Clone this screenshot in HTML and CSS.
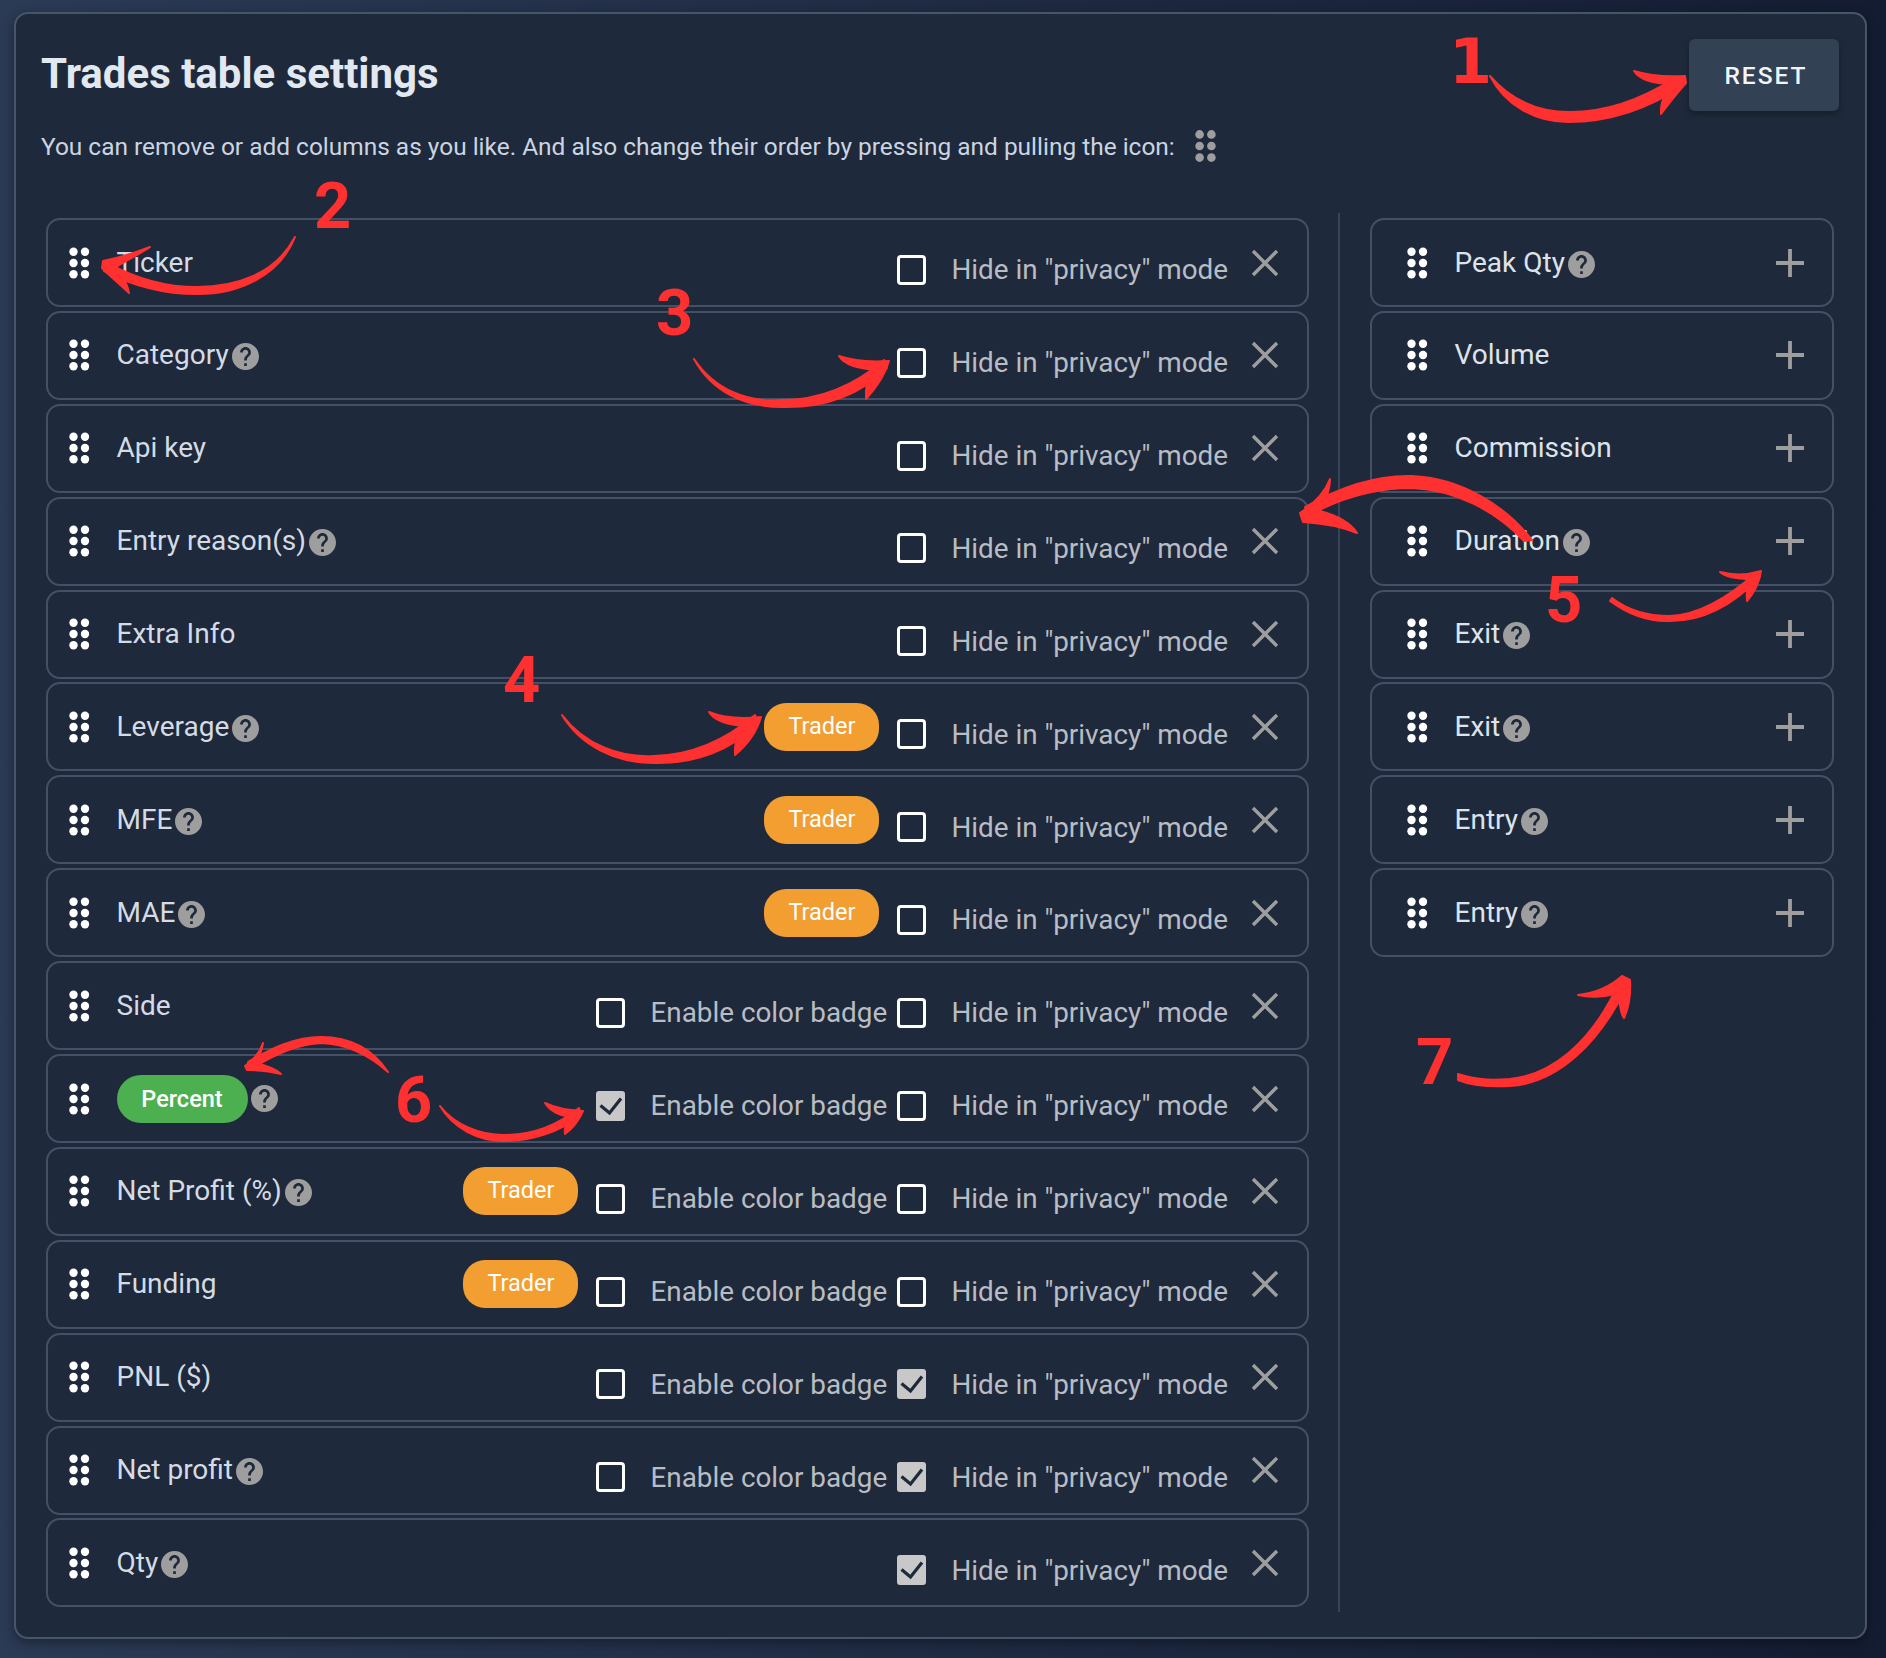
FILE: index.html
```html
<!DOCTYPE html>
<html>
    <head>
        <meta charset="utf-8">
        <title>Trades table settings</title>
        <link rel="stylesheet" href="styles.css">
    </head>
    <body>
       <svg class="defs" width="0" height="0">
           <symbol id="drag" viewBox="0 0 20.5 32">
               <circle cx="4.5" cy="4.7" r="4.2"/><circle cx="16" cy="4.7" r="4.2"/>
               <circle cx="4.5" cy="16" r="4.2"/><circle cx="16" cy="16" r="4.2"/>
               <circle cx="4.5" cy="27.3" r="4.2"/><circle cx="16" cy="27.3" r="4.2"/>
           </symbol>
           <symbol id="help" viewBox="2 2 20 20">
               <path d="M12 2C6.48 2 2 6.48 2 12s4.48 10 10 10 10-4.48 10-10S17.52 2 12 2zm1 17h-2v-2h2v2zm2.07-7.75l-.9.92C13.45 12.9 13 13.5 13 15h-2v-.5c0-1.1.45-2.1 1.17-2.83l1.24-1.26c.37-.36.59-.86.59-1.41 0-1.1-.9-2-2-2s-2 .9-2 2H8c0-2.21 1.79-4 4-4s4 1.79 4 4c0 .88-.36 1.68-.93 2.25z"/>
           </symbol>
           <symbol id="close" viewBox="0 0 28 28">
               <path d="M2 2L26 26M26 2L2 26" fill="none" stroke="currentColor" stroke-width="3.4"/>
           </symbol>
           <symbol id="plus" viewBox="0 0 28 28">
               <path d="M14 0V28M0 14H28" fill="none" stroke="currentColor" stroke-width="3.8"/>
           </symbol>
           <symbol id="check" viewBox="0 0 29 30">
               <rect width="29" height="30" rx="3" fill="#c8c8c8"/>
               <path d="M4.5 14.5L13.5 22L25 7.5" fill="none" stroke="#1e293b" stroke-width="3.2"/>
           </symbol>
       </svg>

       <div class="panel">
           <div class="head">
               <h1>Trades table settings</h1>
               <button class="reset">RESET</button>
           </div>
           <div class="intro">
               <span>You can remove or add columns as you like. And also change their order by pressing and pulling the icon:</span>
               <svg class="intro-drag"><use href="#drag"/></svg>
           </div>

           <div class="columns">
               <div class="list list-left">
                   <div class="row">
                       <svg class="drag"><use href="#drag"/></svg><span class="name">Ticker</span>
                       <div class="opts">
                           <span class="box"></span><span class="opt-text">Hide in "privacy" mode</span>
                       </div>
                       <svg class="close"><use href="#close"/></svg>
                   </div>
                   <div class="row">
                       <svg class="drag"><use href="#drag"/></svg><span class="name">Category</span><svg class="help"><use href="#help"/></svg>
                       <div class="opts">
                           <span class="box"></span><span class="opt-text">Hide in "privacy" mode</span>
                       </div>
                       <svg class="close"><use href="#close"/></svg>
                   </div>
                   <div class="row">
                       <svg class="drag"><use href="#drag"/></svg><span class="name">Api key</span>
                       <div class="opts">
                           <span class="box"></span><span class="opt-text">Hide in "privacy" mode</span>
                       </div>
                       <svg class="close"><use href="#close"/></svg>
                   </div>
                   <div class="row">
                       <svg class="drag"><use href="#drag"/></svg><span class="name">Entry reason(s)</span><svg class="help"><use href="#help"/></svg>
                       <div class="opts">
                           <span class="box"></span><span class="opt-text">Hide in "privacy" mode</span>
                       </div>
                       <svg class="close"><use href="#close"/></svg>
                   </div>
                   <div class="row">
                       <svg class="drag"><use href="#drag"/></svg><span class="name">Extra Info</span>
                       <div class="opts">
                           <span class="box"></span><span class="opt-text">Hide in "privacy" mode</span>
                       </div>
                       <svg class="close"><use href="#close"/></svg>
                   </div>
                   <div class="row">
                       <svg class="drag"><use href="#drag"/></svg><span class="name">Leverage</span><svg class="help"><use href="#help"/></svg>
                       <span class="trader">Trader</span>
                       <div class="opts opts-trader">
                           <span class="box"></span><span class="opt-text">Hide in "privacy" mode</span>
                       </div>
                       <svg class="close"><use href="#close"/></svg>
                   </div>
                   <div class="row">
                       <svg class="drag"><use href="#drag"/></svg><span class="name">MFE</span><svg class="help"><use href="#help"/></svg>
                       <span class="trader">Trader</span>
                       <div class="opts opts-trader">
                           <span class="box"></span><span class="opt-text">Hide in "privacy" mode</span>
                       </div>
                       <svg class="close"><use href="#close"/></svg>
                   </div>
                   <div class="row">
                       <svg class="drag"><use href="#drag"/></svg><span class="name">MAE</span><svg class="help"><use href="#help"/></svg>
                       <span class="trader">Trader</span>
                       <div class="opts opts-trader">
                           <span class="box"></span><span class="opt-text">Hide in "privacy" mode</span>
                       </div>
                       <svg class="close"><use href="#close"/></svg>
                   </div>
                   <div class="row">
                       <svg class="drag"><use href="#drag"/></svg><span class="name">Side</span>
                       <div class="opts">
                           <span class="box"></span><span class="opt-text opt-color">Enable color badge</span>
                           <span class="box"></span><span class="opt-text">Hide in "privacy" mode</span>
                       </div>
                       <svg class="close"><use href="#close"/></svg>
                   </div>
                   <div class="row">
                       <svg class="drag"><use href="#drag"/></svg><span class="percent">Percent</span><svg class="help help-percent"><use href="#help"/></svg>
                       <div class="opts">
                           <svg class="box-on"><use href="#check"/></svg><span class="opt-text opt-color">Enable color badge</span>
                           <span class="box"></span><span class="opt-text">Hide in "privacy" mode</span>
                       </div>
                       <svg class="close"><use href="#close"/></svg>
                   </div>
                   <div class="row">
                       <svg class="drag"><use href="#drag"/></svg><span class="name">Net Profit (%)</span><svg class="help"><use href="#help"/></svg>
                       <span class="trader">Trader</span>
                       <div class="opts opts-trader">
                           <span class="box"></span><span class="opt-text opt-color">Enable color badge</span>
                           <span class="box"></span><span class="opt-text">Hide in "privacy" mode</span>
                       </div>
                       <svg class="close"><use href="#close"/></svg>
                   </div>
                   <div class="row">
                       <svg class="drag"><use href="#drag"/></svg><span class="name">Funding</span>
                       <span class="trader">Trader</span>
                       <div class="opts opts-trader">
                           <span class="box"></span><span class="opt-text opt-color">Enable color badge</span>
                           <span class="box"></span><span class="opt-text">Hide in "privacy" mode</span>
                       </div>
                       <svg class="close"><use href="#close"/></svg>
                   </div>
                   <div class="row">
                       <svg class="drag"><use href="#drag"/></svg><span class="name">PNL ($)</span>
                       <div class="opts">
                           <span class="box"></span><span class="opt-text opt-color">Enable color badge</span>
                           <svg class="box-on"><use href="#check"/></svg><span class="opt-text">Hide in "privacy" mode</span>
                       </div>
                       <svg class="close"><use href="#close"/></svg>
                   </div>
                   <div class="row">
                       <svg class="drag"><use href="#drag"/></svg><span class="name">Net profit</span><svg class="help"><use href="#help"/></svg>
                       <div class="opts">
                           <span class="box"></span><span class="opt-text opt-color">Enable color badge</span>
                           <svg class="box-on"><use href="#check"/></svg><span class="opt-text">Hide in "privacy" mode</span>
                       </div>
                       <svg class="close"><use href="#close"/></svg>
                   </div>
                   <div class="row">
                       <svg class="drag"><use href="#drag"/></svg><span class="name">Qty</span><svg class="help"><use href="#help"/></svg>
                       <div class="opts">
                           <svg class="box-on"><use href="#check"/></svg><span class="opt-text">Hide in "privacy" mode</span>
                       </div>
                       <svg class="close"><use href="#close"/></svg>
                   </div>
               </div>

               <div class="divider"></div>

               <div class="list list-right">
                   <div class="row row-add"><svg class="drag"><use href="#drag"/></svg><span class="name">Peak Qty</span><svg class="help"><use href="#help"/></svg><svg class="plus"><use href="#plus"/></svg></div>
                   <div class="row row-add"><svg class="drag"><use href="#drag"/></svg><span class="name">Volume</span><svg class="plus"><use href="#plus"/></svg></div>
                   <div class="row row-add"><svg class="drag"><use href="#drag"/></svg><span class="name">Commission</span><svg class="plus"><use href="#plus"/></svg></div>
                   <div class="row row-add"><svg class="drag"><use href="#drag"/></svg><span class="name">Duration</span><svg class="help"><use href="#help"/></svg><svg class="plus"><use href="#plus"/></svg></div>
                   <div class="row row-add"><svg class="drag"><use href="#drag"/></svg><span class="name">Exit</span><svg class="help"><use href="#help"/></svg><svg class="plus"><use href="#plus"/></svg></div>
                   <div class="row row-add"><svg class="drag"><use href="#drag"/></svg><span class="name">Exit</span><svg class="help"><use href="#help"/></svg><svg class="plus"><use href="#plus"/></svg></div>
                   <div class="row row-add"><svg class="drag"><use href="#drag"/></svg><span class="name">Entry</span><svg class="help"><use href="#help"/></svg><svg class="plus"><use href="#plus"/></svg></div>
                   <div class="row row-add"><svg class="drag"><use href="#drag"/></svg><span class="name">Entry</span><svg class="help"><use href="#help"/></svg><svg class="plus"><use href="#plus"/></svg></div>
               </div>
           </div>
       </div>

       <!-- red hand drawn notes on top of the page -->
       <svg class="notes" viewBox="0 0 1886 1658">
           <text class="note-one" x="1449" y="83">1</text>
           <path d="M1490 76C1515 105 1545 112 1570 112C1610 112 1645 97 1675 78L1682 86C1650 108 1610 122 1568 122C1535 122 1505 105 1490 76Z"/>
           <path d="M1634 71C1650 76 1668 77 1685 76L1686 83C1675 95 1668 105 1661 114C1660 105 1664 96 1668 90L1672 84C1655 84 1640 80 1634 71Z"/>

           <text x="314" y="228">2</text>
           <path d="M295 237C275 275 235 287 197 287C165 287 135 278 108 263L104 271C135 287 165 294 197 294C240 294 280 275 295 237Z"/>
           <path d="M150 247C135 253 118 258 103 261L102 268C112 278 122 286 129 293C128 284 122 275 116 267C127 260 140 254 150 247Z"/>

           <text x="656" y="335">3</text>
           <path d="M694 359C715 390 748 403 782 400C820 400 855 385 884 360L887 368C860 395 825 408 782 407C745 407 712 392 694 359Z"/>
           <path d="M839 356C856 362 872 362 889 361C885 375 876 388 866 399C865 388 868 378 873 370C860 368 845 366 839 356Z"/>

           <text x="503" y="702">4</text>
           <path d="M562 715C585 745 620 758 654 756C695 755 728 738 755 715L758 723C732 750 695 764 654 763C615 763 580 745 562 715Z"/>
           <path d="M709 712C726 719 743 719 761 717C757 731 747 745 735 755C734 745 737 735 744 726C730 725 715 722 709 712Z"/>

           <text x="1545" y="622">5</text>
           <path d="M1532 540C1505 505 1460 478 1412 476C1375 475 1340 487 1305 507L1308 516C1340 498 1375 488 1412 488C1455 490 1495 510 1524 541Z"/>
           <path d="M1330 479C1325 492 1315 503 1300 513L1303 522C1320 523 1340 526 1357 533C1350 522 1335 515 1320 511C1325 502 1330 490 1330 479Z"/>
           <path d="M1612 598C1630 612 1650 616 1670 616C1700 615 1730 596 1757 572L1760 577C1735 603 1705 621 1670 621C1645 622 1625 612 1610 601Z"/>
           <path d="M1720 572C1735 576 1748 575 1761 571C1759 583 1754 593 1747 601C1746 594 1748 585 1752 579C1740 579 1727 578 1720 572Z"/>

           <text x="395" y="1122">6</text>
           <path d="M388 1072C372 1048 348 1037 321 1037C295 1037 272 1048 248 1062L251 1069C275 1054 298 1044 321 1043C345 1044 368 1054 388 1072Z"/>
           <path d="M263 1043C260 1052 254 1060 245 1066L247 1070C258 1070 270 1071 281 1074C275 1068 264 1065 256 1063C259 1057 262 1050 263 1043Z"/>
           <path d="M440 1106C455 1125 480 1135 504 1135C532 1135 558 1125 579 1108L581 1115C560 1132 532 1141 504 1141C478 1141 453 1128 440 1106Z"/>
           <path d="M545 1103C557 1109 570 1110 583 1111C579 1120 573 1128 565 1134C564 1127 566 1122 570 1117C560 1116 550 1111 545 1103Z"/>

           <text x="1416" y="1084">7</text>
           <path d="M1458 1074C1480 1081 1495 1080 1510 1079C1550 1075 1590 1045 1618 985L1625 990C1600 1040 1560 1083 1510 1086C1490 1087 1470 1085 1458 1080Z"/>
           <path d="M1578 995C1596 993 1612 985 1622 976L1630 980C1631 995 1629 1007 1624 1018C1620 1012 1619 1000 1620 992C1608 997 1590 998 1578 995Z"/>
       </svg>
    </body>
</html>
```

FILE: styles.css
```css
* {
    box-sizing: border-box;
}
body {
    position: relative;
    margin: 0;
    height: 1658px;
    overflow: hidden;
    padding: 12px 19px 0 14px;
    background: linear-gradient(to right, #2b3a55, #141c32);
    font-family: Roboto, "Liberation Sans", sans-serif;
}
.defs {
    position: absolute;
}

/*Main*/
.panel {
    height: 1627px;
    padding: 25px 26px 0 25px;
    background-color: #1e293b;
    border: 2px solid #475569;
    border-radius: 14px;
    box-shadow: 0 4px 12px rgba(0, 0, 0, 0.35);
}
.head {
    display: flex;
    justify-content: space-between;
    align-items: center;
    height: 72px;
}
h1 {
    margin: 0 0 3px 0;
    font-size: 42px;
    font-weight: 700;
    color: #e2e8f0;
}
.reset {
    width: 150px;
    height: 72px;
    padding: 0 0 0 4px;
    background-color: #334155;
    border: none;
    border-radius: 6px;
    box-shadow: 0 3px 6px rgba(0, 0, 0, 0.3);
    color: #f1f5f9;
    font-family: inherit;
    font-size: 24.5px;
    font-weight: 500;
    letter-spacing: 2px;
}
.intro {
    display: flex;
    align-items: center;
    height: 38px;
    margin-top: 16px;
    font-size: 24.45px;
    color: #cbd5e1;
}
.intro-drag {
    width: 21px;
    height: 34px;
    margin-left: 20px;
    fill: #9e9e9e;
}
.columns {
    display: flex;
    height: 1399px;
    margin-top: 48px;
    padding: 5px 5px 0 5px;
}
.list {
    display: flex;
    flex-direction: column;
    gap: 3.9px;
}
.list-left {
    flex: none;
    width: 1263px;
}
.list-right {
    flex: 1;
}
.divider {
    flex: none;
    width: 2px;
    margin: -5px 30px 0 29px;
    background-color: #374357;
}

.row {
    display: flex;
    align-items: center;
    height: 89px;
    padding: 0 28px 0 21px;
    border: 2px solid #445066;
    border-radius: 14px;
    font-size: 28px;
    color: #d5dbe4;
}
.drag {
    flex: none;
    width: 20.5px;
    height: 32px;
    margin-right: 27px;
    fill: #ffffff;
}
.name {
    margin-bottom: 1px;
}
.help {
    flex: none;
    width: 27px;
    height: 27px;
    margin: 3px 0 0 3px;
    fill: #9e9e9e;
}
.help-percent {
    margin: 0 0 0 3px;
}
.percent {
    width: 131px;
    height: 48px;
    line-height: 48px;
    border-radius: 24px;
    text-align: center;
    font-size: 23.5px;
    font-weight: 500;
    background-color: #4caf50;
    color: #ffffff;
}
.trader {
    flex: none;
    width: 115px;
    height: 48px;
    line-height: 46px;
    margin-left: auto;
    border-radius: 22px;
    text-align: center;
    font-size: 23.5px;
    background-color: #f39e30;
    color: #ffffff;
}
.opts {
    display: flex;
    align-items: center;
    margin: 14.5px 0 0 auto;
}
.opts-trader {
    margin-left: 18px;
}
.box {
    flex: none;
    width: 29px;
    height: 30px;
    border: 3px solid #ffffff;
    border-radius: 4px;
}
.box-on {
    flex: none;
    width: 29px;
    height: 30px;
}
.opt-text {
    margin-left: 25px;
    font-size: 27.85px;
    color: #b9bdc3;
    white-space: nowrap;
}
.opt-color {
    width: 237px;
    margin-right: 10px;
}
.close {
    flex: none;
    width: 28px;
    height: 28px;
    margin-left: 23px;
    color: #9e9e9e;
}
.row-add {
    padding-left: 35px;
}
.row-add .name {
    color: #dde3ea;
}
.plus {
    flex: none;
    width: 28px;
    height: 28px;
    margin-left: auto;
    color: #9e9e9e;
}

/* red notes, they lie over everything */
.notes {
    position: absolute;
    left: 0;
    top: 0;
    width: 1886px;
    height: 1658px;
    fill: #ff3030;
    pointer-events: none;
}
.notes path {
    stroke: #ff3030;
    stroke-width: 2px;
    stroke-linejoin: round;
}
.notes text {
    font-family: Roboto, sans-serif;
    font-size: 65px;
    font-weight: 700;
}
.notes .note-one {
    font-family: "DejaVu Sans", sans-serif;
    font-size: 62px;
}
```
